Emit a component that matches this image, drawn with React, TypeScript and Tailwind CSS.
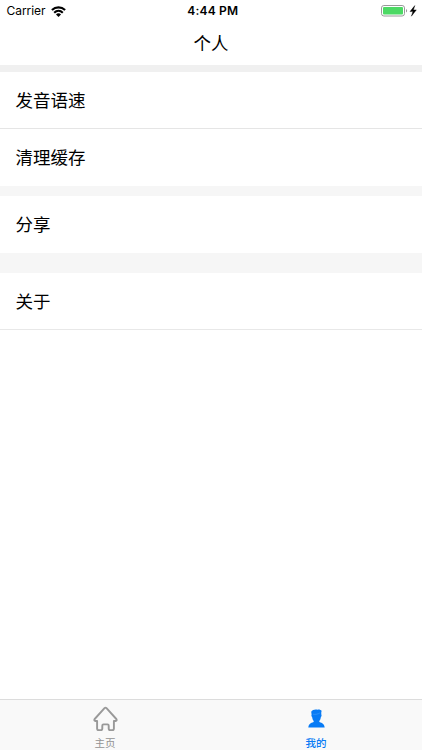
const cjk = "font-['Noto_Sans_CJK_SC',sans-serif]"

function StatusBar() {
  return (
    <div className="flex h-[22px] items-center justify-between pl-[6.5px] pr-[5px] font-['Inter',sans-serif] text-[12px] text-black">
      <div className="flex w-[120px] items-center gap-[6px]">
        <span className="tracking-[-0.05px]">Carrier</span>
        <svg width="15" height="11" viewBox="0 0 15 11" fill="none" stroke="black" strokeWidth="2.1">
          <path d="M0.9 4.1C4.7 0.4 10.3 0.4 14.1 4.1" />
          <path d="M3.2 6.7C5.7 4.3 9.3 4.3 11.8 6.7" />
          <path d="M5 8.4C6.4 7 8.6 7 10 8.4L7.5 10.9Z" fill="black" stroke="none" />
        </svg>
      </div>
      <span className="pl-[2px] font-semibold tracking-[0.2px]">4:44 PM</span>
      <div className="flex w-[120px] items-center justify-end">
        <svg width="36" height="12" viewBox="0 0 36 12">
          <rect x="0.5" y="0.5" width="23" height="10.5" rx="2.4" fill="white" stroke="#999" />
          <rect x="2" y="2" width="20" height="7.5" rx="1" fill="#4cd964" />
          <path d="M25 4V7.5C26.5 7 26.5 4.5 25 4Z" fill="#999" />
          <path d="M33.8 0.6L29 6.6H31.9L30.4 11.2L35.3 4.9H32.4Z" fill="black" stroke="black" strokeWidth="0.4" />
        </svg>
      </div>
    </div>
  )
}

function Row({ label, className }: { label: string; className: string }) {
  return (
    <div className={`flex items-center bg-white pl-[15.5px] text-[17.5px] leading-none text-black ${className}`}>
      <span>{label}</span>
    </div>
  )
}

function HomeIcon() {
  return (
    <svg width="26" height="26" viewBox="0.5 0 26 26" fill="none" stroke="#999" strokeWidth="1.9" strokeLinejoin="round">
      <path d="M12 2.2Q13 1.2 14 2.2L23.8 13Q24.8 14.7 23 15H21.4V22.5Q21.4 24.1 19.8 24.1H17.8Q16.2 24.1 16.2 22.5V19.7Q16.2 18.4 15 18.4H11Q9.8 18.4 9.8 19.7V22.5Q9.8 24.1 8.2 24.1H6.2Q4.6 24.1 4.6 22.5V15H3Q1.2 14.7 2.2 13Z" />
    </svg>
  )
}

function PersonIcon() {
  return (
    <svg width="18" height="19" viewBox="0.5 0 18 19" fill="#087bf5">
      <path d="M3.7 2.7C5 0.5 8 0 10 0.7C11.4 0.2 13.3 0.7 14.2 2C13.5 3.1 13.9 4.3 13.8 5.5C14.3 6 14.1 7.5 13.4 8C13.1 10 12.6 11.1 11.8 11.9V12.8C13 14 16.8 13.8 17.2 18.5H0.8C1.2 13.8 5 14 6.2 12.8V11.9C5.4 11.1 4.9 10 4.6 8C3.9 7.5 3.7 6.3 4.1 5.5Z" />
      <path d="M5.5 5.2C7.5 5.7 10.8 5.1 12.4 3.9" fill="none" stroke="#6bb1fb" strokeWidth="0.4" />
    </svg>
  )
}

export default function App() {
  return (
    <div className={`flex h-[750px] w-full flex-col bg-white ${cjk}`}>
      <StatusBar />
      <header className="flex h-[43px] items-center justify-center pb-px text-[17.5px] leading-none text-black">个人</header>
      <main className="flex-1">
        <div className="h-[6.5px] bg-[#f0f0f0]" />
        <Row label="发音语速" className="h-[57px] border-b border-[#e5e5e5]" />
        <Row label="清理缓存" className="h-[57px]" />
        <div className="h-[10px] bg-[#f6f6f6]" />
        <Row label="分享" className="h-[57px]" />
        <div className="h-[20.5px] bg-[#f6f6f6]" />
        <Row label="关于" className="h-[57px] border-b border-[#e8e8e8]" />
      </main>
      <nav className="grid h-[51px] grid-cols-2 border-t border-[#dcdcdc] bg-[#f9f9f9] text-[10.5px] leading-none">
        <div className="flex flex-col items-center pt-[6px] text-[#929292]">
          <HomeIcon />
          <span className="mt-[6px] pr-px">主页</span>
        </div>
        <div className="flex flex-col items-center pt-[9px] font-medium text-[#087bf5]">
          <PersonIcon />
          <span className="mt-[10px] pr-px">我的</span>
        </div>
      </nav>
    </div>
  )
}
